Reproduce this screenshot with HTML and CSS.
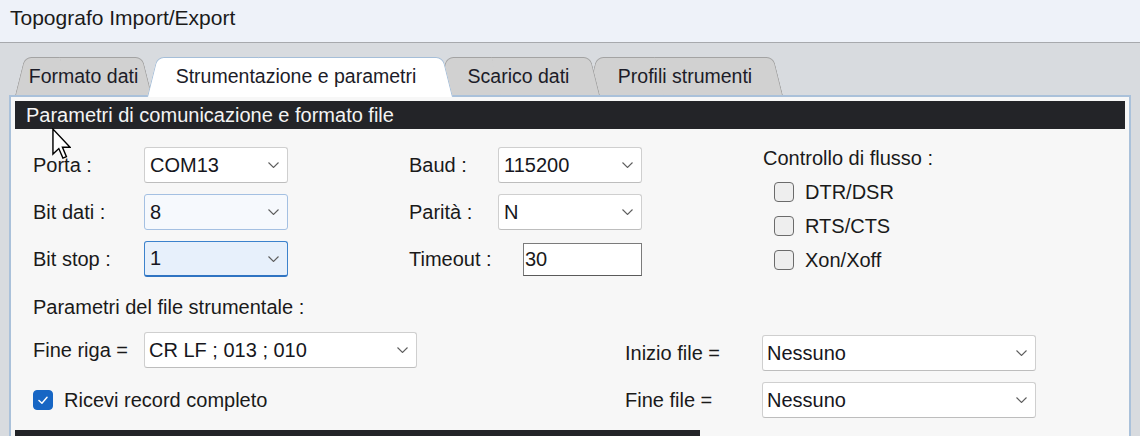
FILE: index.html
```html
<!DOCTYPE html>
<html lang="it">
<head>
<meta charset="utf-8">
<title>Topografo Import/Export</title>
<link rel="stylesheet" href="styles.css">
</head>
<body>
<div class="titlebar">Topografo Import/Export</div>
<div class="tabstrip">
  <div class="tab tab-1">Formato dati</div>
  <div class="tab tab-2 active">Strumentazione e parametri</div>
  <div class="tab tab-3">Scarico dati</div>
  <div class="tab tab-4">Profili strumenti</div>
</div>
<div class="panel">
  <div class="section-header">Parametri di comunicazione e formato file</div>
  <div class="form-top">
    <div class="col col-1">
      <div class="field"><span class="lbl lbl-1">Porta :</span><div class="combo"><span>COM13</span><svg class="chev" viewBox="0 0 11 6"><polyline points="0.5,0.5 5.5,5.5 10.5,0.5"/></svg></div></div>
      <div class="field"><span class="lbl lbl-1">Bit dati :</span><div class="combo combo-hover"><span>8</span><svg class="chev" viewBox="0 0 11 6"><polyline points="0.5,0.5 5.5,5.5 10.5,0.5"/></svg></div></div>
      <div class="field"><span class="lbl lbl-1">Bit stop :</span><div class="combo combo-focus"><span>1</span><svg class="chev" viewBox="0 0 11 6"><polyline points="0.5,0.5 5.5,5.5 10.5,0.5"/></svg></div></div>
    </div>
    <div class="col col-2">
      <div class="field"><span class="lbl lbl-2">Baud :</span><div class="combo"><span>115200</span><svg class="chev" viewBox="0 0 11 6"><polyline points="0.5,0.5 5.5,5.5 10.5,0.5"/></svg></div></div>
      <div class="field"><span class="lbl lbl-2">Parità :</span><div class="combo"><span>N</span><svg class="chev" viewBox="0 0 11 6"><polyline points="0.5,0.5 5.5,5.5 10.5,0.5"/></svg></div></div>
      <div class="field"><span class="lbl lbl-timeout">Timeout :</span><div class="textbox">30</div></div>
    </div>
    <div class="col col-3">
      <div class="flow-title">Controllo di flusso :</div>
      <div class="checks">
        <div class="check-row"><span class="cbox"></span><span>DTR/DSR</span></div>
        <div class="check-row"><span class="cbox"></span><span>RTS/CTS</span></div>
        <div class="check-row"><span class="cbox"></span><span>Xon/Xoff</span></div>
      </div>
    </div>
  </div>
  <div class="form-bottom">
    <div class="bottom-left">
      <div class="sub-title">Parametri del file strumentale :</div>
      <div class="field field-riga"><span class="lbl lbl-1">Fine riga =</span><div class="combo combo-wide"><span>CR LF ; 013 ; 010</span><svg class="chev" viewBox="0 0 11 6"><polyline points="0.5,0.5 5.5,5.5 10.5,0.5"/></svg></div></div>
      <div class="check-row check-record"><span class="cbox checked"><svg viewBox="0 0 20 20"><polyline points="5.5,10.5 8.8,13.6 14.5,7"/></svg></span><span>Ricevi record completo</span></div>
    </div>
    <div class="bottom-right">
      <div class="field"><span class="lbl lbl-file">Inizio file =</span><div class="combo combo-xl"><span>Nessuno</span><svg class="chev" viewBox="0 0 11 6"><polyline points="0.5,0.5 5.5,5.5 10.5,0.5"/></svg></div></div>
      <div class="field"><span class="lbl lbl-file">Fine file =</span><div class="combo combo-xl"><span>Nessuno</span><svg class="chev" viewBox="0 0 11 6"><polyline points="0.5,0.5 5.5,5.5 10.5,0.5"/></svg></div></div>
    </div>
  </div>
  <div class="next-header"></div>
</div>
<svg class="cursor" viewBox="0 0 12 20"><polygon points="0.6,0.6 0.6,16.4 4.3,12.9 6.9,18.9 9.1,18 6.6,12.1 11.4,12.1"/></svg>
</body>
</html>
```

FILE: styles.css
```css
html, body {
  margin: 0;
  padding: 0;
}

body {
  width: 1140px;
  height: 436px;
  overflow: hidden;
  position: relative;
  background: #d8dbdf;
  font-family: "Liberation Sans", Arial, sans-serif;
  color: #1a1a1a;
}

.titlebar {
  height: 42px;
  border-bottom: 1px solid #a7a9ad;
  background: #eef2f9;
  padding-left: 10px;
  line-height: 36px;
  font-size: 21px;
  color: #1b1b1b;
}

.tabstrip {
  display: flex;
  align-items: flex-start;
  height: 52px;
  box-sizing: border-box;
  padding: 14px 0 0 15px;
  background: #d8dbdf;
}

.tab {
  position: relative;
  flex: none;
  height: 38px;
  line-height: 38px;
  box-sizing: border-box;
  text-align: center;
  font-size: 19.5px;
  color: #1c1c28;
  white-space: nowrap;
}

.tab::before,
.tab::after {
  content: "";
  position: absolute;
  top: 0;
  bottom: 0;
  width: 60%;
  background: #d1d1d1;
  border: 1px solid #a3a3a3;
  border-bottom: none;
  z-index: -1;
}

.tab::before {
  left: 0;
  border-right: none;
  border-top-left-radius: 7px;
  transform-origin: 0 100%;
  transform: skewX(-14deg);
}

.tab::after {
  right: 0;
  border-left: none;
  border-top-right-radius: 7px;
  transform-origin: 100% 100%;
  transform: skewX(14deg);
}

.tab.active::before,
.tab.active::after {
  background: #ffffff;
  border-color: #a5bed8;
}

.tab-1 {
  width: 137px;
  z-index: 3;
}

.tab-2 {
  width: 306px;
  height: 40px;
  margin-left: -5px;
  padding-right: 8px;
  z-index: 5;
}

.tab-3 {
  width: 163px;
  margin-left: -16px;
  z-index: 2;
}

.tab-4 {
  width: 196px;
  margin-left: -13px;
  z-index: 1;
}

.panel {
  margin-left: 9px;
  width: 1122px;
  height: 341px;
  overflow: hidden;
  box-sizing: border-box;
  border: 2px solid #aac1da;
  border-bottom: none;
  background: #f7f7f7;
  padding: 4px 4px 0 4px;
}

.section-header {
  height: 28px;
  line-height: 28px;
  padding-left: 11px;
  background: #232428;
  color: #f4f4f4;
  font-size: 20px;
}

.form-top {
  display: flex;
  margin-top: 18px;
  padding-left: 18px;
  font-size: 20px;
}

.col {
  display: flex;
  flex-direction: column;
  gap: 11px;
  flex: none;
}

.col-1 {
  width: 255px;
}

.col-2 {
  width: 233px;
  margin-left: 121px;
}

.col-3 {
  margin-left: 121px;
  gap: 0;
}

.field {
  display: flex;
  align-items: center;
  height: 36px;
}

.lbl {
  flex: none;
  white-space: nowrap;
}

.lbl-1 { width: 111px; }
.lbl-2 { width: 89px; }
.lbl-timeout { width: 114px; }
.lbl-file { width: 137px; }

.combo {
  flex: none;
  width: 144px;
  height: 36px;
  box-sizing: border-box;
  border: 1px solid #cfcfcf;
  border-bottom-color: #bdbdbd;
  border-radius: 3px;
  background: #ffffff;
  display: flex;
  align-items: center;
  justify-content: space-between;
  padding: 0 8px 0 5px;
  font-size: 20px;
  color: #161620;
}

.combo-hover {
  border-color: #a4c0e2;
  background: #f6f9fd;
}

.combo-focus {
  border-color: #3c82cc;
  border-bottom: 2px solid #2f74c2;
  background: #e7f0fb;
}

.combo-wide { width: 273px; padding-left: 4px; }
.combo-xl { width: 274px; padding-left: 4px; }

.chev {
  width: 11px;
  height: 6px;
  flex: none;
}

.chev polyline {
  fill: none;
  stroke: #5e5e5e;
  stroke-width: 1.1;
}

.textbox {
  width: 119px;
  height: 33px;
  box-sizing: border-box;
  border: 1px solid #7b7b7b;
  border-bottom-color: #5a5a5a;
  background: #ffffff;
  padding-left: 1px;
  display: flex;
  align-items: center;
  font-size: 20px;
}

.flow-title {
  line-height: 22px;
  white-space: nowrap;
}

.checks {
  margin-top: 6px;
  display: flex;
  flex-direction: column;
}

.check-row {
  display: flex;
  align-items: center;
  gap: 11px;
  height: 34px;
  padding-left: 11px;
  white-space: nowrap;
}

.cbox {
  flex: none;
  width: 20px;
  height: 20px;
  box-sizing: border-box;
  border: 1.5px solid #6b6b6b;
  border-radius: 4px;
  background: #eeeeee;
  display: flex;
}

.cbox.checked {
  background: #1766c4;
  border-color: #1766c4;
}

.cbox svg {
  width: 100%;
  height: 100%;
}

.cbox svg polyline {
  fill: none;
  stroke: #ffffff;
  stroke-width: 1.6;
  stroke-linecap: round;
  stroke-linejoin: round;
}

.form-bottom {
  display: flex;
  margin-top: 18px;
  padding-left: 18px;
  font-size: 20px;
}

.bottom-left {
  flex: none;
  width: 592px;
}

.sub-title {
  line-height: 24px;
  white-space: nowrap;
}

.field-riga {
  margin-top: 13px;
}

.check-record {
  margin-top: 20px;
  height: 24px;
  padding-left: 0;
}

.bottom-right {
  padding-top: 40px;
  display: flex;
  flex-direction: column;
  gap: 11px;
}

.next-header {
  margin-top: 12px;
  width: 685px;
  height: 6px;
  background: #232428;
}

.cursor {
  position: absolute;
  left: 52px;
  top: 128px;
  width: 19px;
  height: 32px;
}

.cursor polygon {
  fill: #ffffff;
  stroke: #000000;
  stroke-width: 0.9;
  stroke-linejoin: miter;
}
```
